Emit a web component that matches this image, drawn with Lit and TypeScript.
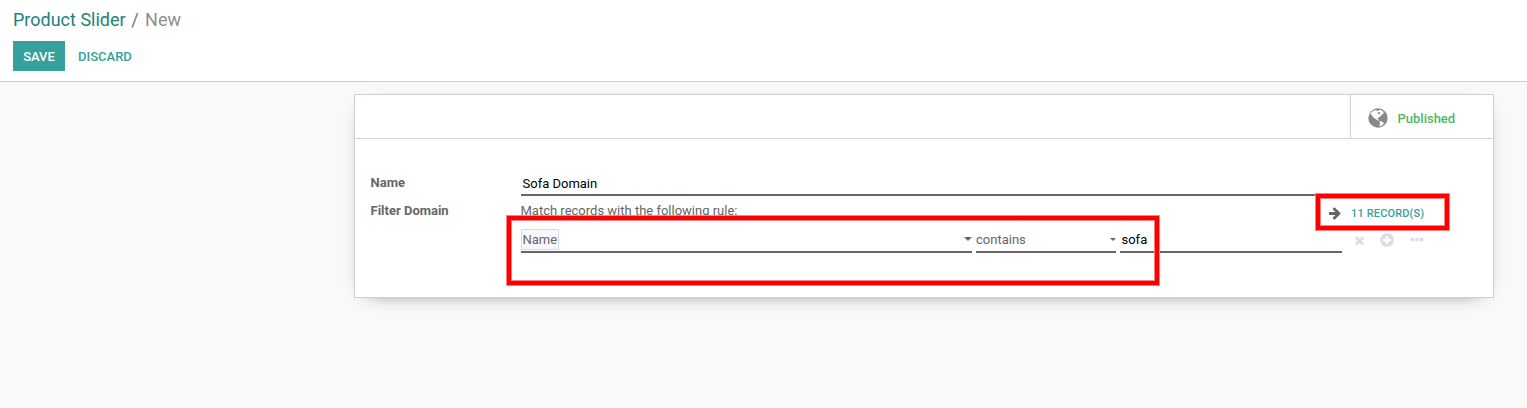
import { LitElement, html, css, svg } from "lit";
import { customElement, property } from "lit/decorators.js";

const ICONS: Record<string, string> = {
  arrow:
    "M1600 960q0 54-37 91l-651 651q-39 37-91 37-51 0-90-37l-75-75q-38-38-38-91t38-91l293-293h-704q-52 0-84.5-37.5t-32.5-90.5v-128q0-53 32.5-90.5t84.5-37.5h704l-293-294q-38-36-38-90t38-90l75-75q38-38 90-38 53 0 91 38l651 651q37 35 37 90z",
  times:
    "M1490 1322q0 40-28 68l-136 136q-28 28-68 28t-68-28l-294-294-294 294q-28 28-68 28t-68-28l-136-136q-28-28-28-68t28-68l294-294-294-294q-28-28-28-68t28-68l136-136q28-28 68-28t68 28l294 294 294-294q28-28 68-28t68 28l136 136q28 28 28 68t-28 68l-294 294 294 294q28 28 28 68z",
  plus:
    "M1344 960v-128q0-26-19-45t-45-19h-256v-256q0-26-19-45t-45-19h-128q-26 0-45 19t-19 45v256h-256q-26 0-45 19t-19 45v128q0 26 19 45t45 19h256v256q0 26 19 45t45 19h128q26 0 45-19t19-45v-256h256q26 0 45-19t19-45zm320-64q0 209-103 385.5t-279.5 279.5-385.5 103-385.5-103-279.5-279.5-103-385.5 103-385.5 279.5-279.5 385.5-103 385.5 103 279.5 279.5 103 385.5z",
  dots:
    "M576 736v192q0 40-28 68t-68 28h-192q-40 0-68-28t-28-68v-192q0-40 28-68t68-28h192q40 0 68 28t28 68zm512 0v192q0 40-28 68t-68 28h-192q-40 0-68-28t-28-68v-192q0-40 28-68t68-28h192q40 0 68 28t28 68zm512 0v192q0 40-28 68t-68 28h-192q-40 0-68-28t-28-68v-192q0-40 28-68t68-28h192q40 0 68 28t28 68z",
};

@customElement("fa-icon")
class FaIcon extends LitElement {
  @property() name = "plus";
  static styles = css`
    :host { display: block; flex: none; }
    svg { display: block; width: 100%; height: 100%; fill: currentColor; overflow: visible; }
  `;
  render() {
    return html`<svg viewBox="0 0 1792 1792">${svg`<path d=${ICONS[this.name]}></path>`}</svg>`;
  }
}

@customElement("globe-icon")
class GlobeIcon extends LitElement {
  static styles = css`
    :host { display: block; flex: none; }
    svg { display: block; width: 100%; height: 100%; }
    .sea { fill: currentColor; }
    .land { fill: #fff; }
  `;
  render() {
    return html`<svg viewBox="0 0 20 20">
      <circle class="sea" cx="10" cy="10" r="9.7"></circle>
      <path class="land" d="M1.9 6.2L3.4 4.2 5.4 2.7 7.4 1.9 9.3 2.5 8.6 3.4 10.2 3 11.4 1.8 13.6 2.3 15.2 3.4 15.7 5.2 14.4 6.2 13.4 7.5 12 8.2 11.3 9.4 9.9 9.7 9.3 10.8 10.5 11.5 11.3 12.7 9.4 12.2 7.4 10.7 5.6 9.8 4.6 8.2 3.6 6.8Z"></path>
      <path class="sea" d="M9.6 4.4L11.2 4 12.4 5.2 11 6.4 9.8 5.6Z"></path>
      <path class="land" d="M11.3 13.5L13.3 13.2 14.3 14.1 16 14.8 15 16.4 13.5 17.4 11.8 18.3 11.4 17.6 12 15.8Z"></path>
    </svg>`;
  }
}

@customElement("app-root")
class AppRoot extends LitElement {
  static styles = css`
    :host {
      display: block; position: relative; height: 408px; overflow: hidden;
      background: #f9f9f9; color: #666; font: 13px/20px Roboto, sans-serif;
    }
    * { box-sizing: border-box; }
    .panel { height: 82px; padding: 6px 13px 0; background: #fff; border-bottom: 1px solid #ccc; }
    .crumbs { display: flex; font-size: 18px; line-height: 27px; }
    .crumbs a { color: #21827e; }
    .crumbs .sep { padding: 0 6.5px 0 5.5px; color: #6c757d; }
    .crumbs .here { color: #8f8f8f; }
    .buttons { display: flex; margin-top: 8px; font-weight: 500; line-height: 30px; }
    .save { width: 52px; height: 30px; padding-top: 1px; background: #35a19c; color: #fff; text-align: center; }
    .discard { padding: 1px 0 0 13px; color: #35a19c; }
    .sheet {
      width: 1140px; height: 204px; margin: 12px 0 0 354px; background: #fff;
      border: 1px solid #ced1d9; box-shadow: 0 5px 20px -15px #000;
    }
    .statbar { height: 44px; display: flex; justify-content: flex-end; border-bottom: 1px solid #ced4da; }
    .stat { width: 143px; display: flex; align-items: center; padding: 4px 0 0 17px; border-left: 1px solid #ced4da; }
    .globe { width: 20px; height: 20px; margin-top: -1px; color: #888; }
    .stat span { margin-left: 9.5px; font-weight: 500; color: #4bb869; }
    .form { display: grid; grid-template-columns: 150px 821px 108px; padding: 33px 0 0 16px; }
    .label { font-weight: 700; line-height: 22px; height: 28px; margin-left: -0.5px; }
    .value { height: 24px; line-height: 24px; padding-left: 1.5px; color: #000; border-bottom: 2px solid #666; }
    .field { grid-column: 2 / 3; }
    .rule { grid-column: 2 / 3; line-height: 22px; height: 28px; margin-left: -0.5px; }
    .records { display: flex; align-items: center; height: 27px; margin-left: -14px; font-size: 11px; font-weight: 500; letter-spacing: 0.15px; color: #35a19c; }
    .records fa-icon { width: 14px; height: 14px; margin: -2px 9px 0 0; color: #666; }
    .leaf { grid-column: 2; display: grid; grid-template-columns: 451px 140px 222px; column-gap: 4px; }
    .cell { display: flex; align-items: center; justify-content: space-between; height: 25px; padding-bottom: 1px; border-bottom: 2px solid #666; }
    .cell .text { padding-top: 2px; }
    .tag { height: 21px; width: 38px; line-height: 19px; padding: 0 0 0 0.5px; border: 1px solid #d5dce6; background: #f8f9fb; }
    .caret { border: solid transparent; border-width: 4px 4px 0; border-top-color: #666; }
    .caret.small { border-width: 3px 3px 0; border-top-color: #666; }
    .typed { color: #000; padding-left: 1.5px; }
    .actions { display: flex; align-items: center; height: 24px; padding-left: 10.5px; color: #ddd; }
    .x { width: 13px; height: 13px; margin-top: 1px; }
    .plus { width: 16px; height: 16px; margin-left: 13px; }
    .dots { width: 16px; height: 16px; margin-left: 14px; }
    .mark { position: absolute; border: 4px solid #f00; box-shadow: 0 0 0 1px #ff8080, inset 0 0 0 1px #ff8080; }
    .mark-rule { left: 507px; top: 216px; width: 652px; height: 69px; }
    .mark-records { left: 1316px; top: 194px; width: 133px; height: 36px; }
  `;
  render() {
    return html`
      <header class="panel">
        <nav class="crumbs"><a>Product Slider</a><span class="sep">/</span><span class="here">New</span></nav>
        <div class="buttons"><div class="save">SAVE</div><div class="discard">DISCARD</div></div>
      </header>
      <main class="sheet">
        <div class="statbar"><div class="stat"><globe-icon class="globe"></globe-icon><span>Published</span></div></div>
        <div class="form">
          <div class="label">Name</div>
          <div class="field"><div class="value">Sofa Domain</div></div>
          <div></div>
          <div class="label">Filter Domain</div>
          <div class="rule">Match records with the following rule:</div>
          <div class="records"><fa-icon name="arrow"></fa-icon>11 RECORD(S)</div>
          <div class="leaf">
            <div class="cell"><span class="tag">Name</span><i class="caret"></i></div>
            <div class="cell"><span class="text">contains</span><i class="caret small"></i></div>
            <div class="cell typed"><span class="text">sofa</span></div>
          </div>
          <div class="actions">
            <fa-icon class="x" name="times"></fa-icon>
            <fa-icon class="plus" name="plus"></fa-icon>
            <fa-icon class="dots" name="dots"></fa-icon>
          </div>
        </div>
      </main>
      <div class="mark mark-rule"></div>
      <div class="mark mark-records"></div>
    `;
  }
}
